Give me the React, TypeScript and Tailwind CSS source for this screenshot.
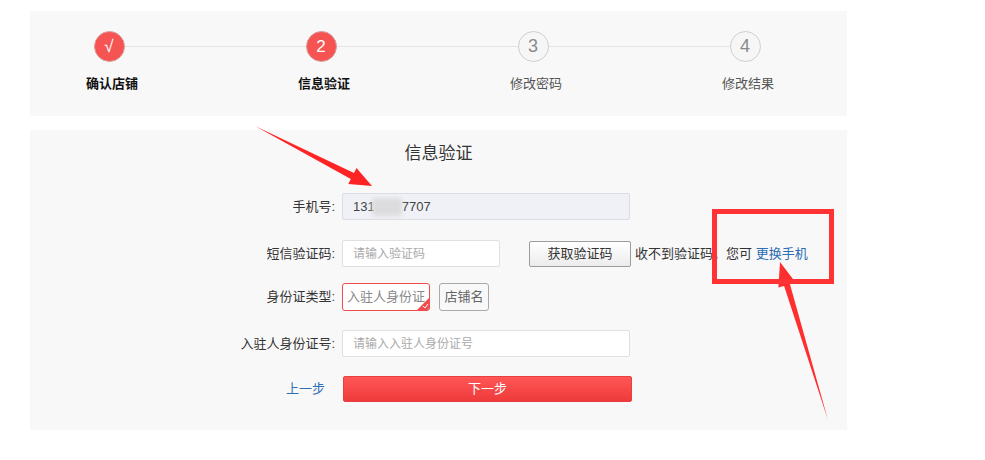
export default function App() {
  const steps = [
    { mark: '√', label: '确认店铺', done: true },
    { mark: '2', label: '信息验证', done: true },
    { mark: '3', label: '修改密码', done: false },
    { mark: '4', label: '修改结果', done: false },
  ]

  return (
    <div
      className="relative min-h-[460px] bg-white pt-[11px] pl-[30px] text-[#333]"
      style={{ fontFamily: '"Liberation Sans", "Noto Sans CJK SC", sans-serif' }}
    >
      {/* Step bar */}
      <div className="w-[817px] h-[105px] bg-[#f8f8f8]">
        <div className="relative flex gap-[62px] pl-[4px] pt-[20px]">
          <div className="absolute left-[79px] top-[35px] w-[636px] h-px bg-[#e4e4e4]" />
          {steps.map((s) => (
            <div key={s.label} className="relative z-10 w-[150px] flex flex-col items-center">
              <div
                className={
                  s.done
                    ? 'w-[31px] h-[31px] rounded-full bg-[#f65353] border border-[#d8a0a0] flex items-center justify-center text-white text-[17px]'
                    : 'w-[31px] h-[31px] rounded-full bg-[#f6f6f6] border border-[#cfcfcf] flex items-center justify-center text-[#8a8a8a] text-[18px] font-light'
                }
              >
                {s.mark}
              </div>
              <div
                className={
                  s.done
                    ? 'mt-[13px] pl-[6px] text-[13px] leading-[18px] font-bold text-[#111]'
                    : 'mt-[13px] pl-[6px] text-[13px] leading-[18px] text-[#555]'
                }
              >
                {s.label}
              </div>
            </div>
          ))}
        </div>
      </div>

      {/* Form panel */}
      <div className="mt-[14px] w-[817px] bg-[#f8f8f8] pb-[28px] text-[13px]">
        <div className="pt-[12px] text-center text-[17px] leading-[24px] text-[#333]">信息验证</div>

        <div className="mt-[27px] flex items-center h-[27px]">
          <div className="w-[305px] text-right">手机号:</div>
          <div className="ml-[7px] w-[288px] h-[27px] border border-[#dcdde3] rounded-[2px] bg-[#f0f1f6] flex items-center pl-[10px] text-[#444]">
            <span>131</span>
            <span className="-ml-[3px] inline-block w-[30px] h-[18px] rounded-[4px] bg-[#dcdcde] blur-[2px]" />
            <span>7707</span>
          </div>
        </div>

        <div className="mt-[20px] flex items-center h-[27px]">
          <div className="w-[305px] text-right">短信验证码:</div>
          <div className="ml-[7px] w-[158px] h-[27px] border border-[#e0e0e0] rounded-[2px] bg-white flex items-center pl-[10px] text-[12px] text-[#aaa]">
            请输入验证码
          </div>
          <button className="ml-[29px] w-[102px] h-[26px] border border-[#9d9d9d] rounded-[2px] bg-gradient-to-b from-white to-[#ececec] text-[13px] text-[#333]">
            获取验证码
          </button>
          <span className="ml-[4px] text-[#333]">收不到验证码，您可 <span className="text-[#2d6db4]">更换手机</span></span>
        </div>

        <div className="mt-[16px] flex items-center h-[28px]">
          <div className="w-[305px] text-right">身份证类型:</div>
          <div className="relative ml-[7px] w-[88px] h-[28px] border border-[#f24b4b] rounded-[3px] bg-white overflow-hidden flex items-center pl-[4px] text-[13px] text-[#888] whitespace-nowrap">
            入驻人身份证
            <svg className="absolute right-0 bottom-0" width="12" height="12" viewBox="0 0 12 12">
              <polygon points="12,0 12,12 0,12" fill="#f24b4b" />
              <polyline points="6,8 8,10 11,6" fill="none" stroke="#fff" strokeWidth="1" />
            </svg>
          </div>
          <div className="ml-[9px] w-[50px] h-[28px] border border-[#aaa] rounded-[3px] flex items-center justify-center text-[13px] text-[#666]">
            店铺名
          </div>
        </div>

        <div className="mt-[19px] flex items-center h-[27px]">
          <div className="w-[305px] text-right">入驻人身份证号:</div>
          <div className="ml-[7px] w-[288px] h-[27px] border border-[#e0e0e0] rounded-[2px] bg-white flex items-center pl-[10px] text-[12px] text-[#aaa]">
            请输入入驻人身份证号
          </div>
        </div>

        <div className="mt-[19px] flex items-center h-[26px]">
          <div className="w-[305px] text-right pr-[10px] text-[#2d6db4]">上一步</div>
          <button className="ml-[8px] w-[289px] h-[26px] rounded-[2px] bg-gradient-to-b from-[#ff5656] to-[#ee3a3a] border border-[#e84040] text-white text-[13px]">
            下一步
          </button>
        </div>
      </div>

      {/* Red annotations */}
      <svg className="absolute left-0 top-0 pointer-events-none" width="985" height="460">
        <polygon
          points="255,126 354,172.9 356.5,168 372,186 348.3,184 350.8,179.1"
          fill="#ff2424"
        />
        <polygon
          points="828,420 789.9,284.1 795.6,282.4 780,262 778.4,287.6 784.1,285.9"
          fill="#ff2f2f"
        />
      </svg>
      <div className="absolute left-[712px] top-[209px] w-[122px] h-[75px] border-[5px] border-[#ff3333] pointer-events-none" />
    </div>
  )
}
